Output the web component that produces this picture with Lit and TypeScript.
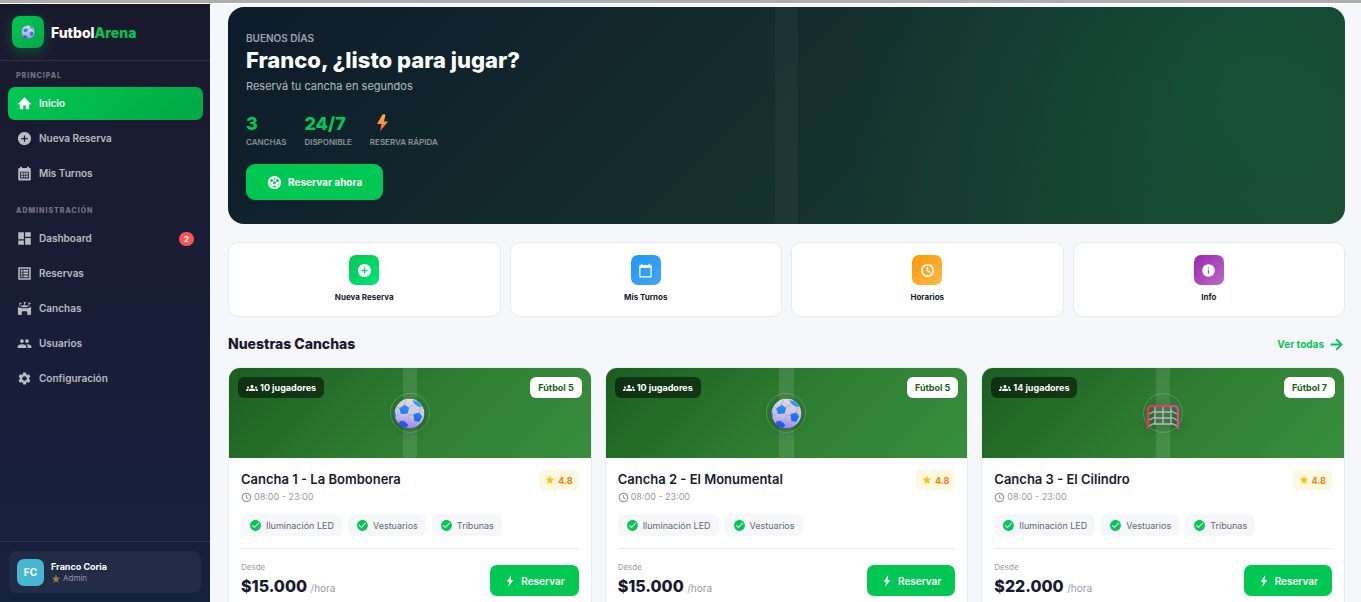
import { LitElement, html, css, svg, nothing } from "lit";
import { customElement, property } from "lit/decorators.js";

const ICONS: Record<string, string> = {
  home: "M10 21v-6h4v6h5.500v-8H23L12 2 1 13h3.500v8z",
  add: "M12 1.500C6.200 1.500 1.500 6.200 1.500 12S6.200 22.500 12 22.500 22.500 17.800 22.500 12 17.800 1.500 12 1.500zM17 13h-4v4h-2v-4H7v-2h4V7h2v4h4v2z",
  month:
    "M5 1h3v2h8V1h3v2h1c1.100 0 2 .9 2 2v16c0 1.100-.9 2-2 2H4c-1.100 0-2-.9-2-2V5c0-1.100.9-2 2-2h1zM5 9v11h14V9zM6.500 10.500h3v3.500h-3zM10.500 10.500h3v3.500h-3zM14.500 10.500h3v3.500h-3zM6.500 15h3v3.500h-3zM10.500 15h3v3.500h-3zM14.500 15h3v3.500h-3z",
  dashboard: "M2 13h9V2H2v11zm0 9h9v-7H2v7zm11 0h9V11h-9v11zm0-20v7h9V2h-9z",
  table:
    "M3 2h18a1 1 0 0 1 1 1v18a1 1 0 0 1-1 1H3a1 1 0 0 1-1-1V3a1 1 0 0 1 1-1zm1.500 2.500v15h15v-15zM6 6h3v3H6zM10.300 6h7.700v3h-7.700zM6 10.500h3v3H6zM10.300 10.500h7.700v3h-7.700zM6 15h3v3H6zM10.300 15h7.700v3h-7.700z",
  stadium:
    "M4 2l4 1.800L5.200 5.200V8H4zM11 1l4.500 1.900-3.300 1.500V7H11zM18.500 2l4 1.800-2.800 1.400V8h-1.200zM1.500 9c2.300 1.700 6 2.600 10.500 2.600S20.200 10.700 22.500 9v12.500c-1.900.5-4 .8-6 1V18c0-1-.7-1.800-1.700-1.800H9.200c-1 0-1.700.8-1.700 1.800v4.500c-2-.2-4.100-.5-6-1zM5 8.200c2-1 5-1.300 7-1.300s5 .3 7 1.300c-1.800 1.200-4.400 1.700-7 1.700s-5.200-.5-7-1.700z",
  people:
    "M16 11c1.660 0 2.990-1.340 2.990-3S17.660 5 16 5c-1.660 0-3 1.340-3 3s1.340 3 3 3zm-8 0c1.660 0 2.990-1.340 2.990-3S9.660 5 8 5C6.340 5 5 6.340 5 8s1.340 3 3 3zm0 2c-2.330 0-7 1.170-7 3.500V19h14v-2.500c0-2.330-4.670-3.500-7-3.500zm8 0c-.29 0-.62.02-.97.05 1.160.84 1.970 1.970 1.970 3.450V19h6v-2.500c0-2.330-4.670-3.500-7-3.500z",
  settings:
    "M19.140 12.940c.04-.3.06-.61.06-.94 0-.32-.02-.64-.07-.94l2.030-1.580c.18-.14.23-.41.12-.61l-1.920-3.320c-.12-.22-.37-.29-.59-.22l-2.390.96c-.5-.38-1.030-.7-1.620-.94l-.36-2.540c-.04-.24-.24-.41-.48-.41h-3.840c-.24 0-.43.17-.47.41l-.36 2.540c-.59.24-1.130.57-1.620.94l-2.390-.96c-.22-.08-.47 0-.59.22L2.740 8.870c-.12.21-.08.47.12.61l2.030 1.580c-.05.3-.09.63-.09.94s.02.64.07.94l-2.030 1.580c-.18.14-.23.41-.12.61l1.920 3.320c.12.22.37.29.59.22l2.390-.96c.5.38 1.030.7 1.620.94l.36 2.540c.05.24.24.41.48.41h3.840c.24 0 .44-.17.47-.41l.36-2.540c.59-.24 1.130-.56 1.620-.94l2.390.96c.22.08.47 0 .59-.22l1.920-3.320c.12-.22.07-.47-.12-.61l-2.010-1.580zM12 15.600c-1.980 0-3.600-1.620-3.600-3.600s1.620-3.600 3.600-3.600 3.600 1.620 3.600 3.600-1.620 3.600-3.600 3.600z",
  today:
    "M20 3h-1V1h-2v2H7V1H5v2H4c-1.100 0-2 .9-2 2v16c0 1.100.9 2 2 2h16c1.100 0 2-.9 2-2V5c0-1.100-.9-2-2-2zm0 18H4V8h16v13z",
  clock:
    "M12 1.500a10.500 10.500 0 1 0 0 21 10.500 10.500 0 0 0 0-21zm0 2.800a7.700 7.700 0 1 1 0 15.400 7.700 7.700 0 0 1 0-15.400zM13 6.500h-2.300v6.300l4.900 3 1.200-1.900-3.800-2.300z",
  info: "M12 2C6.480 2 2 6.480 2 12s4.480 10 10 10 10-4.480 10-10S17.520 2 12 2zm1 15h-2v-6h2v6zm0-8h-2V7h2v2z",
  arrow: "M12.500 3.500l-1.900 1.900 5.300 5.300H3.500v2.600h12.400l-5.300 5.300 1.900 1.900 8.500-8.500z",
  check:
    "M12 2C6.480 2 2 6.480 2 12s4.480 10 10 10 10-4.480 10-10S17.520 2 12 2zm-2 15l-5-5 1.410-1.410L10 14.170l7.590-7.590L19 8l-9 9z",
  star: "M12 17.270L18.180 21l-1.640-7.030L22 9.240l-7.190-.61L12 2 9.190 8.630 2 9.240l5.460 4.730L5.820 21z",
  groups:
    "M12 12.750c1.630 0 3.070.39 4.240.9 1.080.48 1.760 1.560 1.760 2.730V18H6v-1.610c0-1.180.68-2.260 1.760-2.730 1.170-.52 2.610-.91 4.240-.91zM4 13c1.100 0 2-.9 2-2s-.9-2-2-2-2 .9-2 2 .9 2 2 2zm1.130 1.100c-.37-.06-.74-.1-1.130-.1-.99 0-1.930.21-2.780.58C.48 14.900 0 15.620 0 16.430V18h4.500v-1.610c0-.83.23-1.610.63-2.290zM20 13c1.100 0 2-.9 2-2s-.9-2-2-2-2 .9-2 2 .9 2 2 2zm4 3.430c0-.81-.48-1.530-1.220-1.850-.85-.37-1.790-.58-2.780-.58-.39 0-.76.04-1.130.1.4.68.63 1.460.63 2.290V18H24v-1.570zM12 6c1.660 0 3 1.340 3 3s-1.340 3-3 3-3-1.340-3-3 1.340-3 3-3z",
  bolt: "M14.500 0L5.500 13.500h5L8.500 24 18.500 10h-5.300z",
  soccer:
    "M12 1.500a10.500 10.500 0 1 0 0 21 10.500 10.500 0 0 0 0-21zm0 3.200 2 1.500-2 1.500-2-1.500zM7.600 6.400l2.600 2-.3 1-2.700 2-1.700-.7-.4-2.200a7.800 7.800 0 0 1 2.500-2.100zm8.800 0a7.800 7.800 0 0 1 2.500 2.100l-.4 2.200-1.700.7-2.700-2-.3-1zM12 10l2.500 1.800-1 3h-3l-1-3zM4.700 13l1.500.6.900 2.700-.7.700a7.800 7.800 0 0 1-1.700-4zm14.600 0a7.800 7.800 0 0 1-1.700 4l-.7-.7.900-2.700zM10 17.200h4l.6 1.100-.8 1.200a7.800 7.800 0 0 1-3.600 0l-.8-1.200z",
};

const icon = (name: string, size: number) => html`
  <svg width=${size} height=${size} viewBox="0 0 24 24" fill="currentColor" fill-rule="evenodd" aria-hidden="true">
    ${svg`<path d=${ICONS[name]}></path>`}
  </svg>
`;

const ball = (size: number) => html`
  <svg width=${size} height=${size} viewBox="0 0 32 32" role="img" aria-label="Pelota">
    <defs>
      <linearGradient id="skin" x1="0.600" y1="0" x2="0.450" y2="1">
        <stop offset="0" stop-color="#dedbe0" />
        <stop offset="0.600" stop-color="#c9bfe0" />
        <stop offset="1" stop-color="#9580f8" />
      </linearGradient>
      <linearGradient id="patch" gradientUnits="userSpaceOnUse" x1="16" y1="2" x2="14" y2="30">
        <stop offset="0" stop-color="#3a9dff" />
        <stop offset="0.600" stop-color="#1d74f5" />
        <stop offset="1" stop-color="#2a48fb" />
      </linearGradient>
      <clipPath id="round"><circle cx="16" cy="16" r="15.500" /></clipPath>
    </defs>
    <g clip-path="url(#round)">
      <circle cx="16" cy="16" r="15.500" fill="url(#skin)" />
      <path
        d="M11 7 12.500 2M15 10l5-3M13.500 16l2.500 2M7 16l-4 2.500M5.500 10 2 9M20 17.500l-4 .500M26 15l2-5M21 24l-4 2.500M16 18l-1.500 6"
        stroke="#a79dbd" stroke-width="0.700" fill="none"
      />
      <g fill="url(#patch)" stroke="url(#patch)" stroke-width="1" stroke-linejoin="round">
        <path d="M11 7.500 15 10.200 13.700 15.500 7.700 16 5.800 10.800z" />
        <path d="M19.500 2.800 24 3.500 28.500 8.500 26.500 9 21.500 6z" />
        <path d="M20.500 17 26 15.500 28.500 19 26 24 21.500 23.500z" />
        <path d="M6 24.500 10 24 14 27.500 13 30 9.500 29.500 5.500 27z" />
        <path d="M0 13 1 15 1.500 19 0 20z" />
      </g>
    </g>
  </svg>
`;

const goal = html`
  <svg width="34" height="26" viewBox="0 0 34 26" role="img" aria-label="Arco">
    <defs>
      <linearGradient id="post" gradientUnits="userSpaceOnUse" x1="1" y1="0" x2="33" y2="0">
        <stop offset="0" stop-color="#f4304e" />
        <stop offset="1" stop-color="#ee3f9c" />
      </linearGradient>
    </defs>
    <g fill="none" stroke="#c6b4d4" stroke-width="1.300">
      <path d="M9 3v17M17 3v17M25 3v17M9 8h16M9 14h16M8 20h18" />
      <path d="M3 10l6-3M3 16l6-3M3 22l6-3M31 10l-6-3M31 16l-6-3M31 22l-6-3" />
    </g>
    <path d="M2 25V6q0-4 4-4h22q4 0 4 4v19" fill="none" stroke="url(#post)" stroke-width="2.200" />
  </svg>
`;

const flash = html`
  <svg width="13" height="18" viewBox="0 0 13 18" role="img" aria-label="Rayo">
    <defs>
      <linearGradient id="spark" x1="0.500" y1="0" x2="0.500" y2="1">
        <stop offset="0" stop-color="#ffb63d" />
        <stop offset="0.550" stop-color="#ff8a4a" />
        <stop offset="1" stop-color="#f2395a" />
      </linearGradient>
    </defs>
    <path fill="url(#spark)" d="M6.500.5 1 10h4.500L4 17.500 12 7.500H8L9.500 .5z" />
  </svg>
`;

interface NavItem { icon: string; label: string; active?: boolean; badge?: number }
interface Court { name: string; players: number; type: string; emoji: "ball" | "goal"; perks: string[]; price: string }

const MAIN_NAV: NavItem[] = [
  { icon: "home", label: "Inicio", active: true },
  { icon: "add", label: "Nueva Reserva" },
  { icon: "month", label: "Mis Turnos" },
];

const ADMIN_NAV: NavItem[] = [
  { icon: "dashboard", label: "Dashboard", badge: 2 },
  { icon: "table", label: "Reservas" },
  { icon: "stadium", label: "Canchas" },
  { icon: "people", label: "Usuarios" },
  { icon: "settings", label: "Configuración" },
];

const ACTIONS = [
  { icon: "add", label: "Nueva Reserva", tone: "green" },
  { icon: "today", label: "Mis Turnos", tone: "blue" },
  { icon: "clock", label: "Horarios", tone: "orange" },
  { icon: "info", label: "Info", tone: "purple" },
];

const COURTS: Court[] = [
  { name: "Cancha 1 - La Bombonera", players: 10, type: "Fútbol 5", emoji: "ball", perks: ["Iluminación LED", "Vestuarios", "Tribunas"], price: "$15.000" },
  { name: "Cancha 2 - El Monumental", players: 10, type: "Fútbol 5", emoji: "ball", perks: ["Iluminación LED", "Vestuarios"], price: "$15.000" },
  { name: "Cancha 3 - El Cilindro", players: 14, type: "Fútbol 7", emoji: "goal", perks: ["Iluminación LED", "Vestuarios", "Tribunas"], price: "$22.000" },
];

const base = css`
  *, *::before, *::after { box-sizing: border-box; }
  h1, h2, h3, p { margin: 0; }
  a { color: inherit; text-decoration: none; }
  button { font: inherit; border: 0; cursor: pointer; }
  svg { display: block; flex: none; }
`;

@customElement("side-nav")
export class SideNav extends LitElement {
  static styles = [
    base,
    css`
      :host { display: flex; flex-direction: column; background: linear-gradient(180deg, #1a1a2e, #16213e); color: #fff; }
      .brand { display: flex; align-items: center; gap: 7px; height: 57px; padding: 0 12px; border-bottom: 1px solid rgba(255, 255, 255, 0.1); font-size: 14px; font-weight: 800; }
      .logo { display: grid; place-items: center; width: 32px; height: 32px; border-radius: 8px; background: linear-gradient(135deg, #00c853, #00a844); box-shadow: 0 4px 14px rgba(0, 200, 83, 0.3); }
      .accent { color: #00c853; }
      nav { flex: 1; padding: 8px 7px 0 8px; }
      .group { padding-left: 8px; margin-bottom: 4px; font-size: 7px; line-height: 14px; font-weight: 800; letter-spacing: 1px; color: rgba(255, 255, 255, 0.4); }
      .list { margin: 0 0 14px; padding: 0; list-style: none; display: grid; gap: 2px; }
      .item { display: flex; align-items: center; gap: 7px; height: 33px; padding: 0 9px; border-radius: 7px; font-size: 10px; font-weight: 600; color: rgba(255, 255, 255, 0.7); }
      .label { padding-bottom: 2px; }
      .item.active { background: linear-gradient(135deg, #00c853, #00a844); color: #fff; }
      .count { margin-left: auto; min-width: 15px; padding: 0 4px; border-radius: 8px; background: #ff5252; color: #fff; font-size: 8px; line-height: 14px; font-weight: 700; text-align: center; }
      .foot { padding: 9px; border-top: 1px solid rgba(255, 255, 255, 0.1); }
      .user { display: flex; align-items: center; gap: 7px; height: 42px; padding: 0 8px; border-radius: 8px; background: rgba(255, 255, 255, 0.05); }
      .avatar { display: grid; place-items: center; width: 27px; height: 27px; border-radius: 7px; background: #45b7d1; font-size: 10px; font-weight: 700; }
      .name { font-size: 9px; line-height: 13px; font-weight: 700; }
      .role { display: flex; align-items: center; gap: 2px; font-size: 8px; line-height: 11px; color: rgba(255, 255, 255, 0.5); }
      .gold { color: #8d7b3c; }
    `,
  ];

  private list(title: string, items: NavItem[]) {
    return html`
      <p class="group">${title}</p>
      <ul class="list">
        ${items.map(
          (i) => html`<li>
            <a class="item ${i.active ? "active" : ""}" href="#">
              ${icon(i.icon, 15)}<span class="label">${i.label}</span>
              ${i.badge ? html`<span class="count">${i.badge}</span>` : nothing}
            </a>
          </li>`
        )}
      </ul>
    `;
  }

  render() {
    return html`
      <div class="brand">
        <span class="logo">${ball(14)}</span>
        <span>Futbol<span class="accent">Arena</span></span>
      </div>
      <nav>${this.list("PRINCIPAL", MAIN_NAV)}${this.list("ADMINISTRACIÓN", ADMIN_NAV)}</nav>
      <div class="foot">
        <div class="user">
          <span class="avatar">FC</span>
          <div>
            <p class="name">Franco Coria</p>
            <p class="role"><span class="gold">${icon("star", 10)}</span>Admin</p>
          </div>
        </div>
      </div>
    `;
  }
}

@customElement("court-card")
export class CourtCard extends LitElement {
  @property({ attribute: false }) court!: Court;

  static styles = [
    base,
    css`
      :host { display: block; overflow: hidden; border: 1px solid #e8eaef; border-radius: 12px; background: #fff; }
      .pitch {
        position: relative; display: flex; align-items: flex-start; justify-content: space-between; height: 90px; padding: 9px;
        background: linear-gradient(90deg, transparent 48%, rgba(255, 255, 255, 0.1) 48% 52%, transparent 52%), linear-gradient(135deg, #1b5e20, #2e7d32 50%, #388e3c);
      }
      .center { position: absolute; inset: 0; display: grid; place-items: center; }
      .ring { display: grid; place-items: center; width: 40px; height: 40px; border: 1px solid rgba(255, 255, 255, 0.2); border-radius: 50%; }
      .ring svg { filter: drop-shadow(0 3px 4px rgba(0, 0, 0, 0.3)); }
      .ring.low { padding-top: 8px; }
      .tag { position: relative; display: flex; align-items: center; gap: 2px; height: 21px; padding: 0 8px; border-radius: 6px; font-size: 9px; font-weight: 700; }
      .players { background: rgba(0, 0, 0, 0.5); color: #fff; }
      .type { background: #fff; color: #1b5e20; }
      .body { padding: 12px; }
      .head { display: flex; align-items: flex-start; justify-content: space-between; }
      h3 { font-size: 13px; line-height: 18px; font-weight: 600; color: #1a1a2e; }
      .time { display: flex; align-items: center; gap: 2px; margin-top: 2px; font-size: 9px; line-height: 14px; color: #9a9aa5; }
      .rating { display: flex; align-items: center; gap: 3px; height: 20px; padding: 0 6px; border-radius: 5px; background: #fff8e1; font-size: 9px; font-weight: 700; color: #f57c00; }
      .rating svg { color: #ffc107; }
      .perks { display: flex; flex-wrap: wrap; gap: 6px; margin: 10px 0 12px; padding: 0; list-style: none; }
      .perk { display: flex; align-items: center; gap: 4px; height: 22px; padding: 0 8px; border-radius: 6px; background: #f5f7fb; font-size: 9px; color: #666672; }
      .perk svg { color: #00c853; }
      .foot { display: flex; align-items: center; justify-content: space-between; padding-top: 12px; border-top: 1px solid #e8eaef; }
      .from { font-size: 8px; line-height: 12px; color: #9a9aa5; }
      .price { font-size: 16px; line-height: 26px; font-weight: 800; color: #1a1a2e; }
      .unit { font-size: 10px; font-weight: 400; color: #9a9aa5; }
      .book { display: flex; align-items: center; gap: 5px; height: 31px; padding: 0 14px; margin-bottom: 1px; border-radius: 7px; background: #00c853; color: #fff; font-size: 10px; font-weight: 600; }
    `,
  ];

  render() {
    const c = this.court;
    return html`
      <div class="pitch">
        <div class="center">
          <div class="ring ${c.emoji === "goal" ? "low" : ""}">${c.emoji === "goal" ? goal : ball(31)}</div>
        </div>
        <span class="tag players">${icon("groups", 12)}${c.players} jugadores</span>
        <span class="tag type">${c.type}</span>
      </div>
      <div class="body">
        <div class="head">
          <div>
            <h3>${c.name}</h3>
            <p class="time">${icon("clock", 11)}08:00 - 23:00</p>
          </div>
          <span class="rating">${icon("star", 10)}4.8</span>
        </div>
        <ul class="perks">
          ${c.perks.map((p) => html`<li class="perk">${icon("check", 13)}${p}</li>`)}
        </ul>
        <div class="foot">
          <div>
            <p class="from">Desde</p>
            <p class="price">${c.price} <span class="unit">/hora</span></p>
          </div>
          <button class="book" type="button">${icon("bolt", 12)}Reservar</button>
        </div>
      </div>
    `;
  }
}

@customElement("app-root")
export class AppRoot extends LitElement {
  static styles = [
    base,
    css`
      :host { display: flex; flex-direction: column; height: 100vh; overflow: hidden; background: #f5f7fb; font-family: Inter, "Open Sans", sans-serif; color: #1a1a2e; }
      .strip { flex: none; height: 4px; background: #adadad; border-bottom: 1px solid #fff; }
      .shell { flex: 1; min-height: 0; display: grid; grid-template-columns: 210px minmax(0, 1fr); }
      main { min-height: 0; overflow: auto; scrollbar-width: none; padding: 3px 16px 16px 18px; }
      .hero {
        padding: 24px 18px; border-radius: 16px; color: #fff;
        background:
          linear-gradient(90deg, transparent 49%, rgba(255, 255, 255, 0.03) 49% 51%, transparent 51%),
          radial-gradient(circle 400px at 91% 35%, rgba(0, 200, 83, 0.15), transparent),
          linear-gradient(135deg, #0d1b2a, #1b4332);
      }
      .hello { font-size: 10px; line-height: 14px; font-weight: 600; color: rgba(255, 255, 255, 0.6); }
      h1 { margin: 0 0 2px; font-size: 22px; line-height: 30px; font-weight: 800; }
      .lead { font-size: 11px; line-height: 18px; color: rgba(255, 255, 255, 0.7); }
      .stats { display: flex; gap: 18px; margin: 16px 0; }
      .value { display: flex; align-items: center; height: 24px; font-size: 18px; font-weight: 800; color: #00c853; }
      .value svg { margin-left: 6px; }
      .label { margin-top: 1px; font-size: 8px; line-height: 12px; font-weight: 600; color: rgba(255, 255, 255, 0.5); }
      .cta { display: flex; align-items: center; gap: 6px; height: 36px; padding: 0 21px; border-radius: 9px; background: #00c853; color: #fff; font-size: 10px; font-weight: 700; }
      .actions { display: grid; grid-template-columns: repeat(4, minmax(0, 1fr)); gap: 9px; margin: 18px 0 17px; }
      .action { display: flex; flex-direction: column; align-items: center; gap: 5px; padding: 12px; border: 1px solid #e8eaef; border-radius: 10px; background: #fff; font-size: 8px; line-height: 14px; font-weight: 700; }
      .chip { display: grid; place-items: center; width: 30px; height: 30px; border-radius: 7px; color: #fff; }
      .green { background: linear-gradient(135deg, #00c853, #00e676); }
      .blue { background: linear-gradient(135deg, #2196f3, #42a5f5); }
      .orange { background: linear-gradient(135deg, #ff9800, #ffb74d); }
      .purple { background: linear-gradient(135deg, #9c27b0, #ba68c8); }
      .title { display: flex; align-items: center; justify-content: space-between; margin-bottom: 13px; }
      h2 { font-size: 14px; line-height: 20px; font-weight: 800; }
      .more { display: flex; align-items: center; gap: 4px; font-size: 10px; font-weight: 700; color: #00c853; }
      .courts { display: grid; grid-template-columns: repeat(3, minmax(0, 1fr)); gap: 13px; }
    `,
  ];

  render() {
    return html`
      <div class="strip"></div>
      <div class="shell">
        <side-nav></side-nav>
        <main>
          <section class="hero">
            <p class="hello">BUENOS DÍAS</p>
            <h1>Franco, ¿listo para jugar?</h1>
            <p class="lead">Reservá tu cancha en segundos</p>
            <div class="stats">
              <div><p class="value">3</p><p class="label">CANCHAS</p></div>
              <div><p class="value">24/7</p><p class="label">DISPONIBLE</p></div>
              <div><p class="value">${flash}</p><p class="label">RESERVA RÁPIDA</p></div>
            </div>
            <button class="cta" type="button">${icon("soccer", 15)}Reservar ahora</button>
          </section>
          <section class="actions">
            ${ACTIONS.map((a) => html`<a class="action" href="#"><span class="chip ${a.tone}">${icon(a.icon, 15)}</span>${a.label}</a>`)}
          </section>
          <div class="title">
            <h2>Nuestras Canchas</h2>
            <a class="more" href="#">Ver todas ${icon("arrow", 17)}</a>
          </div>
          <section class="courts">
            ${COURTS.map((c) => html`<court-card .court=${c}></court-card>`)}
          </section>
        </main>
      </div>
    `;
  }
}
